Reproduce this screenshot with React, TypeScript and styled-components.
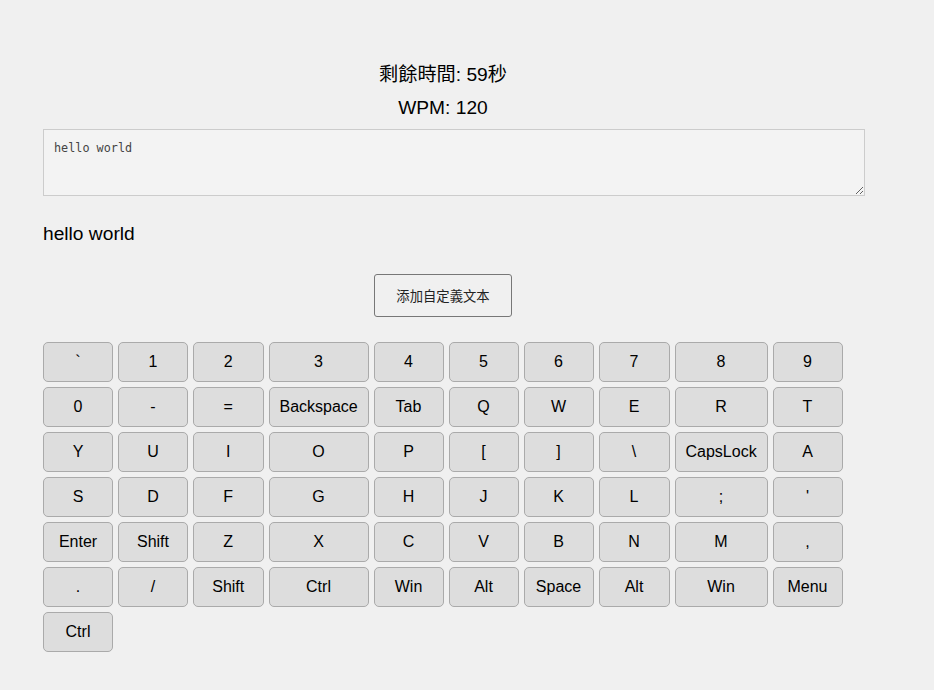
import React from "react";
import styled, { createGlobalStyle } from "styled-components";

const Global = createGlobalStyle`
  html, body { margin: 0; padding: 0; background: #f0f0f0; }
  body { font-family: "Liberation Sans", Arial, sans-serif; color: #000; }
`;

const Page = styled.div`
  width: 800px;
  padding: 64px 43px 40px;
  display: flex;
  flex-direction: column;
`;

const Stat = styled.div<{ $gap: number }>`
  font-family: "Liberation Sans", "Noto Sans CJK TC", sans-serif;
  font-size: 19.2px;
  line-height: 22px;
  text-align: center;
  margin-bottom: ${(p) => p.$gap}px;
`;

const Input = styled.textarea`
  box-sizing: border-box;
  width: 822px;
  height: 67px;
  padding: 11px 10px 9px;
  margin: 0;
  border: 1px solid #ccc;
  background: #f3f3f3;
  font-family: "DejaVu Sans Mono", "Liberation Mono", monospace;
  font-size: 11.8px;
  color: #444;
  outline: none;
`;

const Target = styled.div`
  font-size: 19.2px;
  line-height: 22px;
  margin: 27px 0 29px;
`;

const ButtonRow = styled.div`
  display: flex;
  justify-content: center;
  margin-bottom: 25px;
`;

const AddButton = styled.button`
  box-sizing: border-box;
  width: 138px;
  height: 43px;
  border: 1px solid #777;
  border-radius: 3px;
  background: #f0f0f0;
  font-family: "Liberation Sans", "Noto Sans CJK TC", sans-serif;
  font-size: 13.33px;
  color: #222;
  padding: 0;
`;

const Keyboard = styled.div`
  display: grid;
  grid-template-columns: 70px 70px 70.5px 100px 70px 70px 70px 71px 93px 70px;
  grid-auto-rows: 40px;
  gap: 5px;
`;

const Key = styled.button`
  box-sizing: border-box;
  height: 40px;
  border: 1px solid #aaa;
  border-radius: 5px;
  background: #ddd;
  font-family: "Liberation Sans", Arial, sans-serif;
  font-size: 16px;
  color: #000;
  padding: 0 10px;
  white-space: nowrap;
`;

const keys = [
  "`", "1", "2", "3", "4", "5", "6", "7", "8", "9",
  "0", "-", "=", "Backspace", "Tab", "Q", "W", "E", "R", "T",
  "Y", "U", "I", "O", "P", "[", "]", "\\", "CapsLock", "A",
  "S", "D", "F", "G", "H", "J", "K", "L", ";", "'",
  "Enter", "Shift", "Z", "X", "C", "V", "B", "N", "M", ",",
  ".", "/", "Shift", "Ctrl", "Win", "Alt", "Space", "Alt", "Win", "Menu",
  "Ctrl",
];

export default function App() {
  return (
    <>
      <Global />
      <Page>
        <Stat $gap={11}>剩餘時間: 59秒</Stat>
        <Stat $gap={10}>WPM: 120</Stat>
        <Input defaultValue="hello world" />
        <Target>hello world</Target>
        <ButtonRow>
          <AddButton>添加自定義文本</AddButton>
        </ButtonRow>
        <Keyboard>
          {keys.map((k, i) => (
            <Key key={i}>{k}</Key>
          ))}
        </Keyboard>
      </Page>
    </>
  );
}
